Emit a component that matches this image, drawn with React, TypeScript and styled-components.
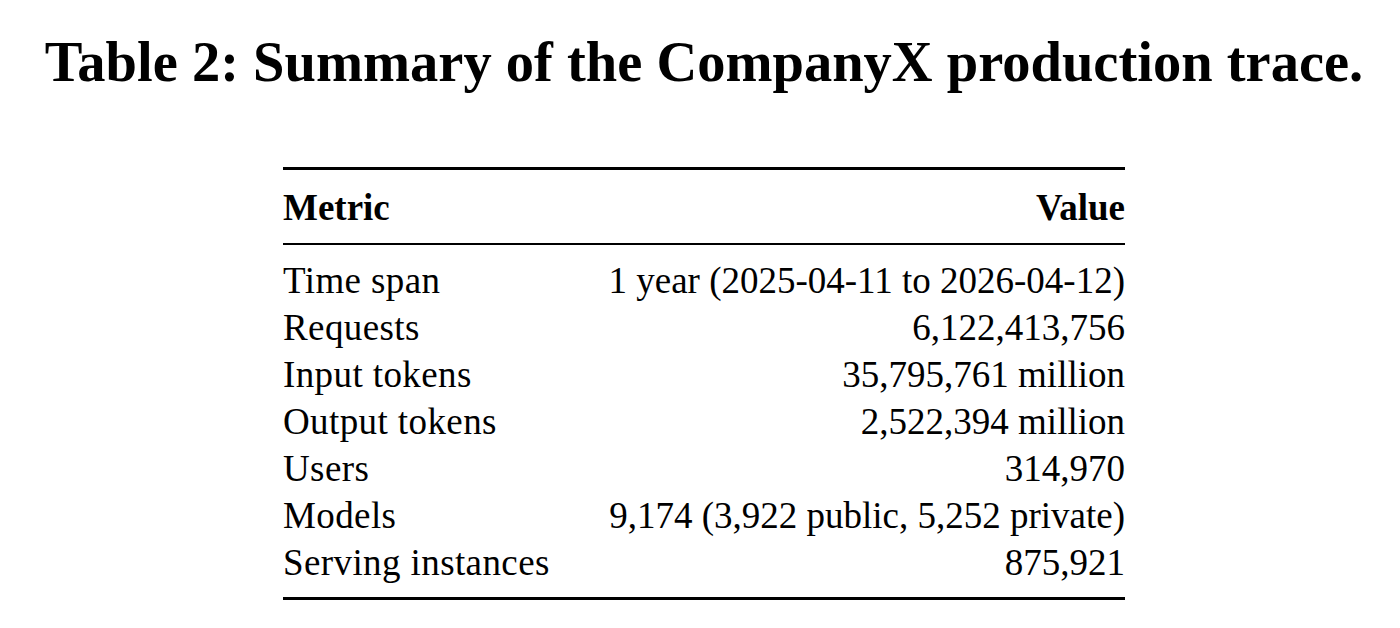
import React from 'react'
import styled, { createGlobalStyle } from 'styled-components'

const GlobalStyle = createGlobalStyle`
    html, body {
        margin: 0;
        padding: 0;
        background: #ffffff;
    }

    body {
        font-family: "Liberation Serif", "Times New Roman", serif;
        color: #000000;
    }
`

const Page = styled.div`
    width: 1400px;
    box-sizing: border-box;
    padding: 34px 0 0 8px;
`

const Caption = styled.h1`
    margin: 0;
    font-size: 56.5px;
    line-height: 56px;
    font-weight: 700;
    text-align: center;
    white-space: nowrap;
`

const Table = styled.div`
    width: 842px;
    margin: 77px auto 0;
`

const Rule = styled.div<{ $weight: number; $gap?: number }>`
    height: ${p => p.$weight}px;
    margin-top: ${p => p.$gap ?? 0}px;
    background: #000000;
`

const HeadRow = styled.div`
    display: flex;
    justify-content: space-between;
    padding-top: 14px;
    font-size: 37px;
    line-height: 47px;
    font-weight: 700;
`

const Body = styled.div`
    padding-top: 12px;
`

const Row = styled.div`
    display: flex;
    justify-content: space-between;
    font-size: 37px;
    line-height: 47px;
    white-space: nowrap;
`

// labels run a touch wider in the original face
const Label = styled.span`
    letter-spacing: 0.4px;
`

const rows: [string, string][] = [
    ['Time span', '1 year (2025-04-11 to 2026-04-12)'],
    ['Requests', '6,122,413,756'],
    ['Input tokens', '35,795,761 million'],
    ['Output tokens', '2,522,394 million'],
    ['Users', '314,970'],
    ['Models', '9,174 (3,922 public, 5,252 private)'],
    ['Serving instances', '875,921'],
]

export default function App() {
    return (
        <Page>
            <GlobalStyle />
            <Caption>Table 2: Summary of the CompanyX production trace.</Caption>

            <Table>
                <Rule $weight={3} />
                <HeadRow>
                    <span>Metric</span>
                    <span>Value</span>
                </HeadRow>
                <Rule $weight={2} $gap={12} />

                <Body>
                    {rows.map(([metric, value]) => (
                        <Row key={metric}>
                            <Label>{metric}</Label>
                            <span>{value}</span>
                        </Row>
                    ))}
                </Body>
                <Rule $weight={3} $gap={11} />
            </Table>
        </Page>
    )
}
